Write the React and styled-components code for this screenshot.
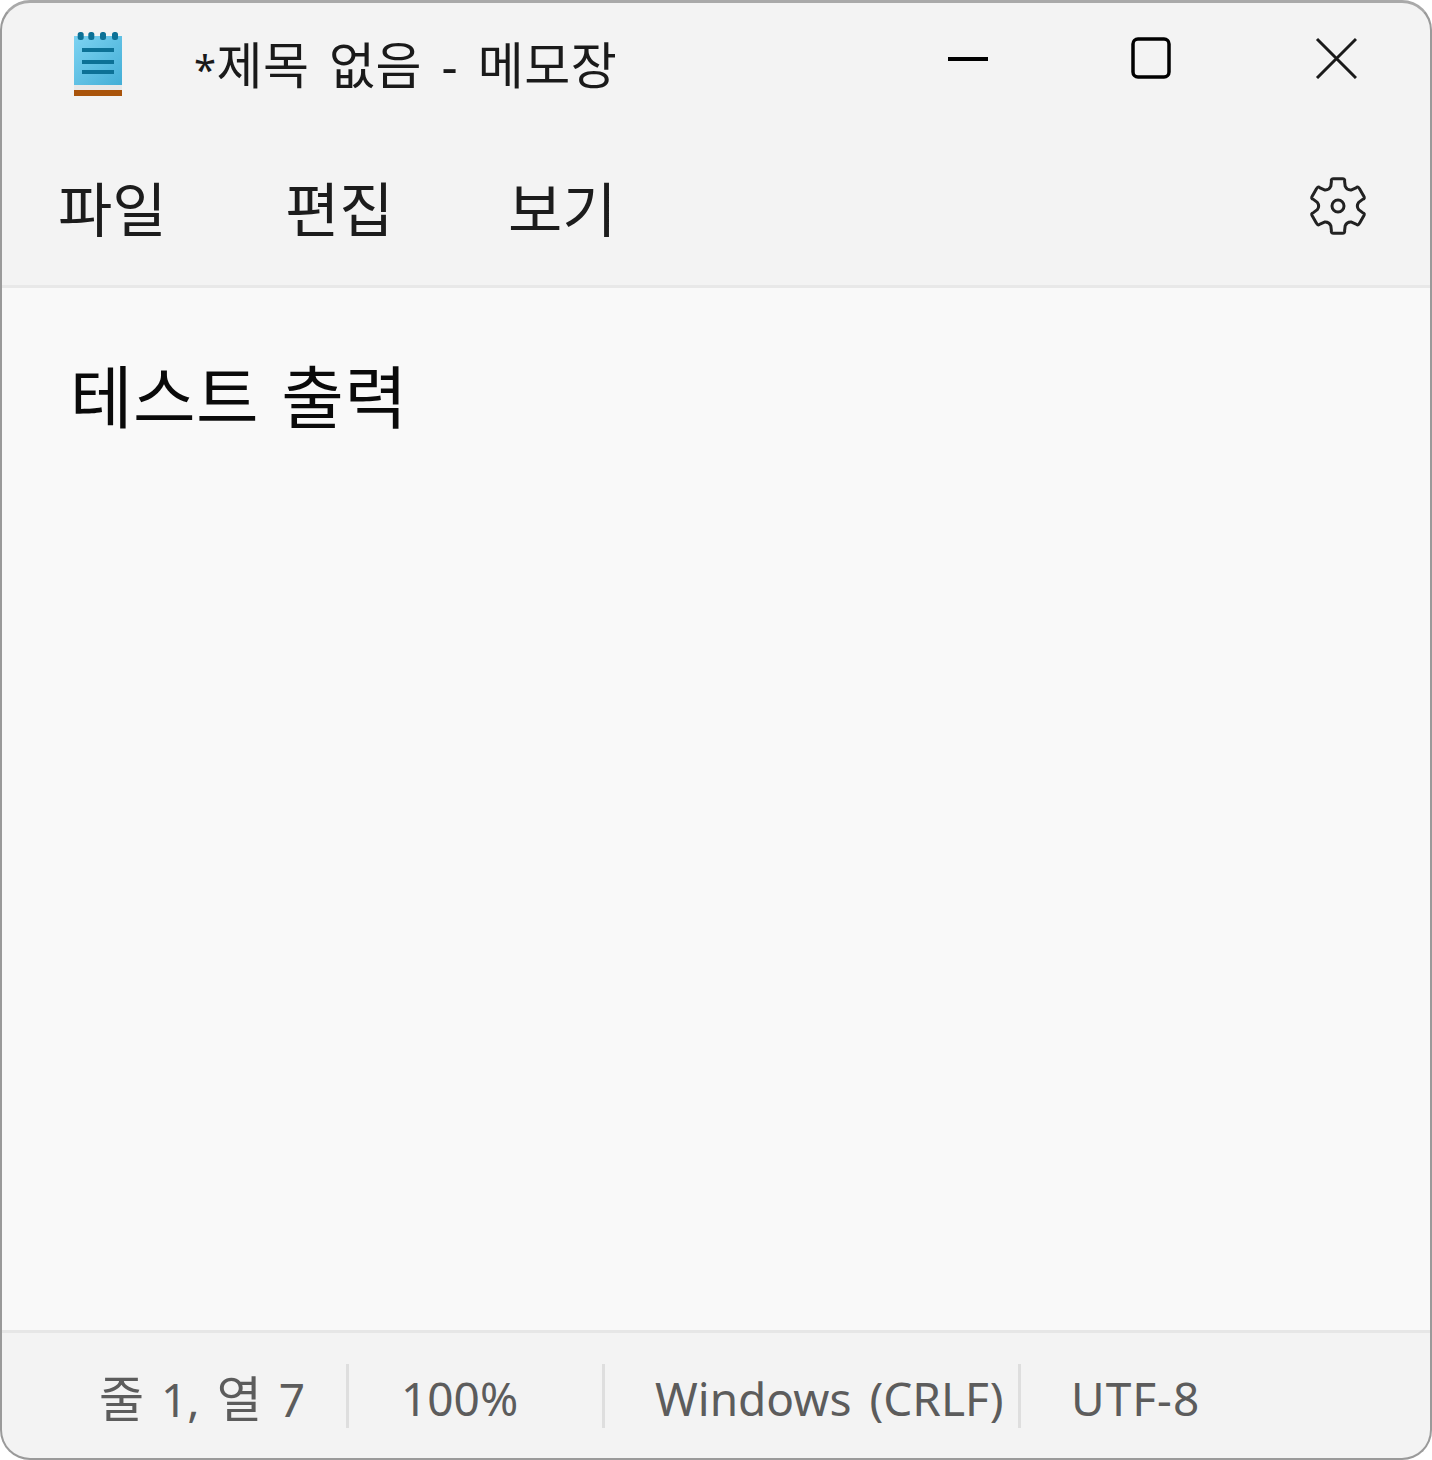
import styled, { createGlobalStyle } from "styled-components";

const GlobalStyle = createGlobalStyle`
  html, body {
    margin: 0;
    padding: 0;
    background: #fff;
  }
`;

const Window = styled.div`
  box-sizing: border-box;
  width: 1432px;
  height: 1460px;
  display: flex;
  flex-direction: column;
  overflow: hidden;
  border: 2px solid #9a9a9a;
  border-top: 3px solid #a9a9a9;
  border-radius: 30px;
  background: #f3f3f3;
  font-family: "Noto Sans", "Noto Sans CJK KR", sans-serif;
`;

const TitleBar = styled.div`
  height: 137px;
  display: flex;
  align-items: flex-start;
  flex-shrink: 0;
`;

const AppIcon = styled.svg`
  width: 48px;
  height: 64px;
  margin: 29px 0 0 72px;
  flex-shrink: 0;
`;

const Title = styled.div`
  width: 753px;
  margin: 32px 0 0 72px;
  font-size: 50px;
  line-height: 60px;
  letter-spacing: 0.5px;
  color: #1a1a1a;
  word-spacing: 6px;
  white-space: nowrap;
`;

const Asterisk = styled.span`
  font-size: 40px;
`;

const WindowButton = styled.svg`
  width: 42px;
  height: 42px;
  margin-top: 34px;
  margin-left: ${(props) => props.$gap}px;
  flex-shrink: 0;
`;

const MenuBar = styled.div`
  height: 148px;
  box-sizing: border-box;
  display: flex;
  align-items: center;
  padding: 0 62px 8px 56px;
  border-bottom: 3px solid #e8e8e8;
  flex-shrink: 0;
`;

const MenuItem = styled.div`
  width: ${(props) => props.$width}px;
  font-size: 59px;
  line-height: 70px;
  color: #1c1c1c;
  white-space: nowrap;
`;

const SettingsIcon = styled.svg`
  margin: -6px 0 0 auto;
  width: 60px;
  height: 60px;
  flex-shrink: 0;
`;

const Editor = styled.div`
  flex: 1;
  background: #f9f9f9;
  padding: 64px 0 0 68px;
  font-size: 68px;
  line-height: 90px;
  letter-spacing: 0.5px;
  color: #0a0a0a;
  word-spacing: 4px;
`;

const StatusBar = styled.div`
  height: 128px;
  box-sizing: border-box;
  display: flex;
  align-items: flex-start;
  padding: 31px 0 0 0;
  border-top: 3px solid #e6e6e6;
  flex-shrink: 0;
`;

const StatusCell = styled.div`
  box-sizing: border-box;
  width: ${(props) => props.$width}px;
  height: 64px;
  padding-left: ${(props) => props.$pad}px;
  font-size: 46px;
  line-height: 68px;
  letter-spacing: ${(props) => props.$tracking || 0}px;
  color: #5c5c5c;
  white-space: nowrap;
  word-spacing: ${(props) => props.$words || 6}px;
  border-right: ${(props) => (props.$last ? "none" : "3px solid #dedede")};
`;

const Hangul = styled.span`
  font-size: 49px;
`;

// six flat-topped teeth with a concave valley between each pair
const polar = (r, deg) => {
  const a = (deg * Math.PI) / 180;
  return `${(r * Math.cos(a)).toFixed(2)} ${(r * Math.sin(a)).toFixed(2)}`;
};

const gearPath = () => {
  let d = "";
  for (let i = 0; i < 6; i++) {
    const a = -90 + i * 60;
    d += `${i === 0 ? "M" : "L"}${polar(21, a - 20)} `;
    d += `L${polar(25.5, a - 15)} Q${polar(28.5, a - 15)} ${polar(27.5, a - 8)} `;
    d += `L${polar(27.5, a + 8)} Q${polar(28.5, a + 15)} ${polar(25.5, a + 15)} `;
    d += `L${polar(21, a + 20)} Q${polar(18, a + 30)} ${polar(21, a + 40)} `;
  }
  return d + "Z";
};

export default function App() {
  return (
    <>
      <GlobalStyle />
      <Window>
        <TitleBar>
          <AppIcon viewBox="0 0 48 64">
            <defs>
              <linearGradient id="pad" x1="0" y1="0" x2="1" y2="1">
                <stop offset="0" stopColor="#7dd3f2" />
                <stop offset="1" stopColor="#43aed6" />
              </linearGradient>
            </defs>
            <rect x="0" y="4" width="48" height="49" fill="url(#pad)" />
            <rect x="0" y="53" width="48" height="5" fill="#e8e8e8" />
            <rect x="0" y="58" width="48" height="6" fill="#a9540b" />
            {[3.7, 14.3, 26, 38].map((x) => (
              <rect key={x} x={x} y="0" width="6" height="8" rx="2.5" fill="#0c7196" />
            ))}
            {[16, 28, 38].map((y) => (
              <rect key={y} x="8" y={y} width="32" height="4" fill="#0c7196" />
            ))}
          </AppIcon>
          <Title><Asterisk>*</Asterisk>제목 없음 - 메모장</Title>
          <WindowButton viewBox="0 0 42 42" $gap={0}>
            <rect x="1" y="20" width="40" height="4" fill="#000" />
          </WindowButton>
          <WindowButton viewBox="0 0 42 42" $gap={142}>
            <rect x="2" y="2" width="36" height="38" rx="5" fill="none" stroke="#000" strokeWidth="3.5" />
          </WindowButton>
          <WindowButton viewBox="0 0 42 42" $gap={142}>
            <path d="M2 2 L41 41 M41 2 L2 41" stroke="#1a1a1a" strokeWidth="3" fill="none" />
          </WindowButton>
        </TitleBar>
        <MenuBar>
          <MenuItem $width={227}>파일</MenuItem>
          <MenuItem $width={223}>편집</MenuItem>
          <MenuItem $width={120}>보기</MenuItem>
          <SettingsIcon viewBox="-30 -30 60 60">
            <path d={gearPath()} fill="none" stroke="#222" strokeWidth="3" strokeLinejoin="round" />
            <circle cx="0" cy="0" r="6" fill="none" stroke="#222" strokeWidth="3" />
          </SettingsIcon>
        </MenuBar>
        <Editor>테스트 출력</Editor>
        <StatusBar>
          <StatusCell $width={347} $pad={97} $words={5}>
            <Hangul>줄</Hangul> 1, <Hangul>열</Hangul> 7
          </StatusCell>
          <StatusCell $width={256} $pad={52}>100%</StatusCell>
          <StatusCell $width={416} $pad={50}>Windows (CRLF)</StatusCell>
          <StatusCell $width={300} $pad={50} $tracking={1} $last>UTF-8</StatusCell>
        </StatusBar>
      </Window>
    </>
  );
}
